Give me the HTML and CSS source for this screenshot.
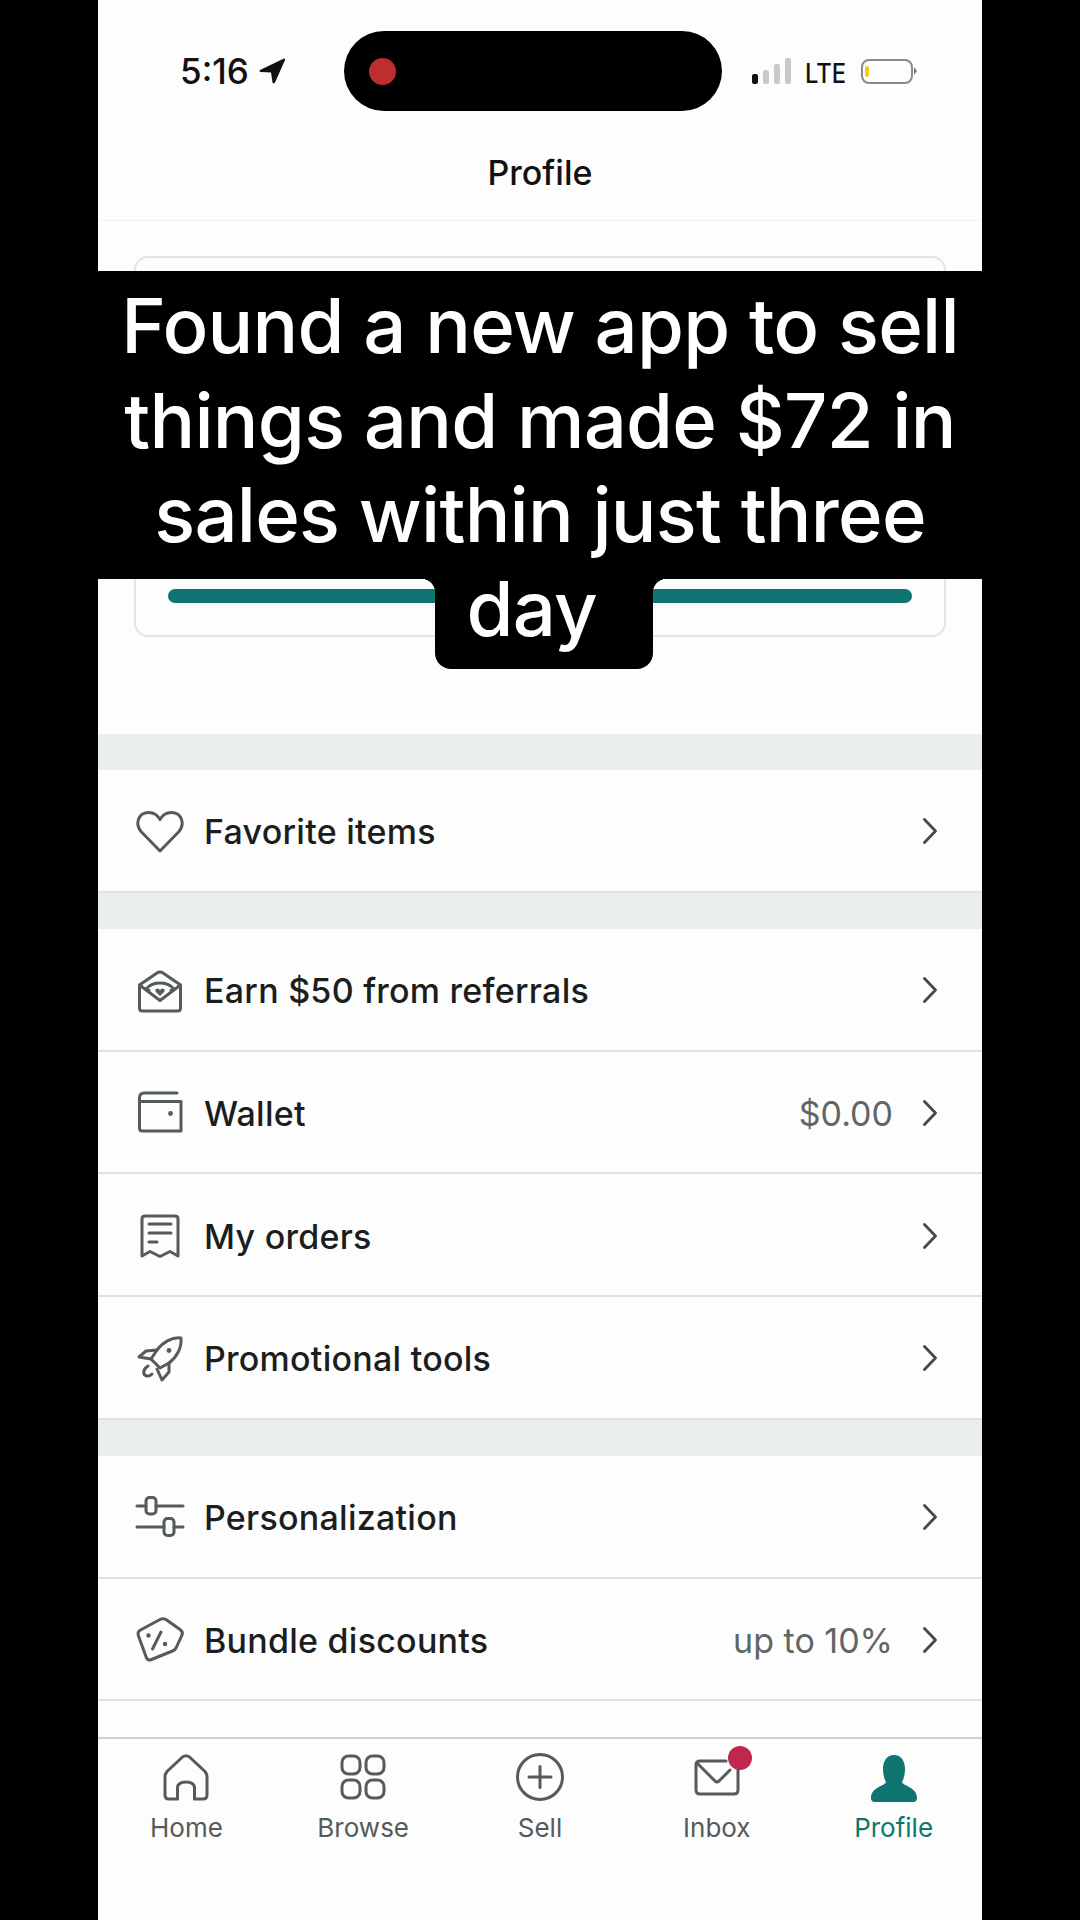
FILE: index.html
```html
<!DOCTYPE html>
<html lang="en">
<head>
    <meta charset="UTF-8">
    <title>Profile</title>
    <link rel="stylesheet" href="styles.css">
</head>
<body>
    <div class="phone">
        <div class="status">
            <div class="status-left">
                <span class="time">5:16</span>
                <svg class="location" viewBox="0 0 28 28"><path d="M26 1.5 L2 13 Q0.5 14.5 3 15 L13 15.5 L14.5 25.5 Q15.5 27.5 17 25.5 L27 3 Q27.5 1 26 1.5 Z"/></svg>
            </div>
            <div class="island"><span class="rec-dot"></span></div>
            <div class="status-right">
                <div class="signal">
                    <span class="bar on"></span><span class="bar b2"></span><span class="bar b3"></span><span class="bar b4"></span>
                </div>
                <span class="lte">LTE</span>
                <div class="battery"><span class="charge"></span></div>
                <span class="nub"></span>
            </div>
        </div>
        <header class="title-bar">Profile</header>

        <div class="card">
            <div class="progress"></div>
        </div>

        <div class="gap"></div>
        <a class="row">
            <svg class="icon" viewBox="0 0 48 48"><path d="M24 45 L5 25.5 C-1 18 2 7 12 6.5 C17 6.3 21.5 9 24 13.5 C26.5 9 31 6.3 36 6.5 C46 7 49 18 43 25.5 Z"/></svg>
            <span class="label">Favorite items</span>
            <svg class="chevron" viewBox="0 0 14 26"><path d="M1.5 1.5 L12.5 13 L1.5 24.5"/></svg>
        </a>
        <div class="gap"></div>
        <a class="row">
            <svg class="icon" viewBox="0 0 48 48"><path d="M3.5 20 L21 8 Q24 6 27 8 L44.5 20 V43 Q44.5 46 41.5 46 H6.5 Q3.5 46 3.5 43 Z"/><path d="M3.5 20 L24 35.5 L44.5 20"/><path d="M13 25 L11 23 Q16 18 24 18 Q32 18 37 23 L35 25"/><path class="solid" d="M24 31 L19.5 26.5 Q19 23.5 21.5 23.5 Q23 23.5 24 25 Q25 23.5 26.5 23.5 Q29 23.5 28.5 26.5 Z"/></svg>
            <span class="label">Earn $50 from referrals</span>
            <svg class="chevron" viewBox="0 0 14 26"><path d="M1.5 1.5 L12.5 13 L1.5 24.5"/></svg>
        </a>
        <a class="row">
            <svg class="icon" viewBox="0 0 48 48"><path d="M41 5 H8 Q3.5 5 3.5 10 V40 Q3.5 43 6.5 43 H45 V13.5 H4"/><circle class="solid" cx="34.5" cy="25.5" r="2.4"/></svg>
            <span class="label">Wallet</span>
            <span class="value">$0.00</span>
            <svg class="chevron" viewBox="0 0 14 26"><path d="M1.5 1.5 L12.5 13 L1.5 24.5"/></svg>
        </a>
        <a class="row">
            <svg class="icon" viewBox="0 0 48 48"><path d="M6 45 V8 Q6 5 9 5 H39 Q42 5 42 8 V45 L34 40.5 L24 45.5 L14 40.5 Z"/><path d="M13 13 H35 M13 22 H35 M13 31 H21"/></svg>
            <span class="label">My orders</span>
            <svg class="chevron" viewBox="0 0 14 26"><path d="M1.5 1.5 L12.5 13 L1.5 24.5"/></svg>
        </a>
        <a class="row">
            <svg class="icon" viewBox="0 0 48 48"><path d="M45 5 C36 4 27 9 21 17 L15 26 L24 35 L33 30 C41 24 46 14 45 5 Z"/><path d="M21 17 L10 18 L3 24 L15 26"/><path d="M33 30 L33 39 L26 47 L21 36"/><path d="M12 33 C7 36 6 42 11 43 C13 43.5 15 42 16 41"/><circle class="solid" cx="33" cy="17.5" r="2.4"/></svg>
            <span class="label">Promotional tools</span>
            <svg class="chevron" viewBox="0 0 14 26"><path d="M1.5 1.5 L12.5 13 L1.5 24.5"/></svg>
        </a>
        <div class="gap"></div>
        <a class="row">
            <svg class="icon" viewBox="0 0 48 48"><path d="M1 14 H10 M20 14 H47 M1 35 H28 M38 35 H47"/><rect x="10" y="5.5" width="10" height="16.5" rx="3.5"/><rect x="28" y="26.5" width="10" height="17" rx="3.5"/></svg>
            <span class="label">Personalization</span>
            <svg class="chevron" viewBox="0 0 14 26"><path d="M1.5 1.5 L12.5 13 L1.5 24.5"/></svg>
        </a>
        <a class="row">
            <svg class="icon" viewBox="0 0 48 48"><path d="M24 4.5 Q27 3 30 4.5 L44 14.5 Q47.5 17 46 20 L40.5 32 Q39.5 35 36.5 36 L15.5 44.5 Q12 46 10.5 43 L2.5 21 Q1 17 4.5 15 Z"/><path d="M25 17 L16.5 34"/><circle class="solid" cx="12.5" cy="20.5" r="2.2"/><circle class="solid" cx="29" cy="29" r="2.2"/></svg>
            <span class="label">Bundle discounts</span>
            <span class="value">up to 10%</span>
            <svg class="chevron" viewBox="0 0 14 26"><path d="M1.5 1.5 L12.5 13 L1.5 24.5"/></svg>
        </a>
        <div class="list-end"></div>

        <nav class="tabs">
            <div class="tab">
                <svg class="icon" viewBox="0 0 48 48"><path d="M15.5 46 H7 Q3 46 3 42 V24 Q3 21 5 18.5 L20.5 4 Q24 1.5 27.5 4 L43 18.5 Q45 21 45 24 V42 Q45 46 41 46 H32.5 V35 Q32.5 29 24 29 Q15.5 29 15.5 35 Z"/></svg>
                <span>Home</span>
            </div>
            <div class="tab">
                <svg class="icon" viewBox="0 0 48 48"><rect x="3" y="3" width="18" height="18" rx="6.5"/><rect x="27" y="3" width="18" height="18" rx="6.5"/><rect x="3" y="27" width="18" height="18" rx="6.5"/><rect x="27" y="27" width="18" height="18" rx="6.5"/></svg>
                <span>Browse</span>
            </div>
            <div class="tab">
                <svg class="icon" viewBox="0 0 48 48"><circle cx="24" cy="24" r="22.5"/><path d="M24 13.5 V34.5 M13 24 H35"/></svg>
                <span>Sell</span>
            </div>
            <div class="tab">
                <div class="inbox-icon">
                    <svg class="icon" viewBox="0 0 48 48"><path d="M33 8 H7 Q3 8 3 12 V37 Q3 41 7 41 H41 Q45 41 45 37 V17"/><path d="M4 10 L22 28 Q24 30 26 28 L37 17"/></svg>
                    <span class="badge"></span>
                </div>
                <span>Inbox</span>
            </div>
            <div class="tab active">
                <svg class="icon" viewBox="0 0 48 48"><path d="M24 2 C31 2 35 8 35 16 C35 23 33 27 32 29 C33 33 47 34 47 45 Q47 49 43 49 H5 Q1 49 1 45 C1 34 15 33 16 29 C15 27 13 23 13 16 C13 8 17 2 24 2 Z"/></svg>
                <span>Profile</span>
            </div>
        </nav>

        <div class="caption">
            <div class="caption-band">Found a new app to sell<br>things and made $72 in<br>sales within just three</div>
            <div class="caption-last">day </div>
        </div>
    </div>
</body>
</html>
```

FILE: styles.css
```css
body {
    margin: 0;
    background-color: #000;
    font-family: Inter, "Liberation Sans", sans-serif;
}

.phone {
    position: relative;
    width: 884px;
    height: 1920px;
    margin: 0 auto;
    background-color: #fdfdfd;
    color: #1c1e1e;
    display: flex;
    flex-direction: column;
    overflow: hidden;
}

/* status bar */
.status {
    display: flex;
    height: 131px;
    padding-top: 31px;
    box-sizing: border-box;
}

.status-left {
    width: 246px;
    box-sizing: border-box;
    padding-left: 82px;
    height: 80px;
    display: flex;
    align-items: center;
    gap: 9px;
}

.time {
    font-size: 35px;
    font-weight: 500;
    color: #111;
}

.location {
    width: 28px;
    height: 28px;
    fill: #111;
}

.island {
    width: 378px;
    height: 80px;
    background-color: #000;
    border-radius: 40px;
    display: flex;
    align-items: center;
    padding-left: 25px;
    box-sizing: border-box;
}

.rec-dot {
    width: 27px;
    height: 27px;
    border-radius: 50%;
    background-color: #bf2e2e;
}

.status-right {
    height: 80px;
    padding-left: 30px;
    display: flex;
    align-items: center;
}

.signal {
    display: flex;
    align-items: flex-end;
    gap: 5px;
    height: 26px;
    margin-right: 14px;
}

.bar {
    width: 6px;
    border-radius: 2px;
    background-color: #c9c9c9;
}

.bar.on {
    height: 10px;
    background-color: #111;
}

.bar.b2 { height: 14px; }
.bar.b3 { height: 20px; }
.bar.b4 { height: 26px; }

.lte {
    font-size: 27px;
    font-weight: 500;
    color: #111;
    margin: 4px 15px 0 0;
    transform: scaleX(0.88);
    transform-origin: left;
    width: 41px;
}

.battery {
    width: 52px;
    height: 25px;
    box-sizing: border-box;
    border: 2px solid #8a8a8a;
    border-radius: 8px;
    padding: 5px 2px;
}

.charge {
    display: block;
    width: 4px;
    height: 100%;
    border-radius: 2px;
    background-color: #eccf1f;
}

.nub {
    width: 0;
    height: 0;
    margin-left: 1px;
    border-left: 3px solid #777;
    border-top: 4px solid transparent;
    border-bottom: 4px solid transparent;
}

.title-bar {
    height: 90px;
    padding-top: 22px;
    box-sizing: border-box;
    border-bottom: 1px solid #f0f1f1;
    text-align: center;
    font-size: 34px;
    font-weight: 500;
    line-height: 40px;
    color: #111;
}

/* card under the caption */
.card {
    height: 381px;
    margin: 35px 36px 97px;
    box-sizing: border-box;
    border: 2px solid #e3e5e5;
    border-radius: 14px;
    padding: 0 32px 32px;
    display: flex;
    flex-direction: column;
    justify-content: flex-end;
}

.progress {
    height: 14px;
    border-radius: 7px;
    background-color: #0e7571;
}

/* list */
.gap {
    height: 36px;
    background-color: #e9edec;
}

.gap:first-of-type {
    height: 35px;
}

.row {
    height: 122.75px;
    box-sizing: border-box;
    border-bottom: 2px solid #dfe2e1;
    padding: 0 45px 0 38px;
    display: flex;
    align-items: center;
    gap: 20px;
}

.label {
    flex: 1;
    font-size: 34px;
    font-weight: 500;
    letter-spacing: 0.25px;
    margin-top: 3px;
}

.value {
    font-size: 34px;
    color: #5f6665;
    margin: 3px 10px 0 0;
}

.icon {
    width: 48px;
    height: 48px;
    flex-shrink: 0;
    overflow: visible;
    fill: none;
    stroke: #555b5a;
    stroke-width: 3;
    stroke-linecap: round;
    stroke-linejoin: round;
}

.icon .solid {
    fill: #555b5a;
    stroke: none;
}

.chevron {
    width: 14px;
    height: 26px;
    margin-top: 2px;
    fill: none;
    stroke: #444a49;
    stroke-width: 2.8;
    stroke-linecap: round;
    stroke-linejoin: round;
}

.list-end {
    flex: 1;
}

/* bottom tabs */
.tabs {
    height: 183px;
    box-sizing: border-box;
    border-top: 2px solid #cdd0cf;
    padding-top: 14px;
    display: grid;
    grid-template-columns: repeat(5, 1fr);
}

.tab {
    display: flex;
    flex-direction: column;
    align-items: center;
    gap: 11px;
    font-size: 26px;
    line-height: 32px;
    color: #555b5a;
}

.tab.active {
    color: #0e7571;
}

.tab.active .icon {
    fill: #0e7571;
    stroke: none;
}

.inbox-icon {
    position: relative;
    width: 48px;
    height: 48px;
}

.badge {
    position: absolute;
    top: -7px;
    right: -11px;
    width: 24px;
    height: 24px;
    border-radius: 50%;
    background-color: #bf274d;
}

/* caption laid over the screen */
.caption {
    position: absolute;
    top: 271px;
    left: 0;
    right: 0;
    display: flex;
    flex-direction: column;
    align-items: center;
    color: #fff;
    font-size: 76px;
    font-weight: 500;
    letter-spacing: -0.75px;
    line-height: 94.7px;
    text-align: center;
}

.caption-band {
    width: 100%;
    height: 308px;
    box-sizing: border-box;
    padding-top: 7px;
    background-color: #000;
    white-space: nowrap;
}

.caption-last {
    position: relative;
    height: 90px;
    padding: 0 37px 0 32px;
    margin-left: 8px;
    line-height: 58px;
    white-space: pre;
    background-color: #000;
    border-radius: 0 0 16px 16px;
}

.caption-last::before,
.caption-last::after {
    content: "";
    position: absolute;
    top: 0;
    width: 14px;
    height: 14px;
}

.caption-last::before {
    right: 100%;
    background: radial-gradient(circle at 0 100%, transparent 14px, #000 14.5px);
}

.caption-last::after {
    left: 100%;
    background: radial-gradient(circle at 100% 100%, transparent 14px, #000 14.5px);
}
```
